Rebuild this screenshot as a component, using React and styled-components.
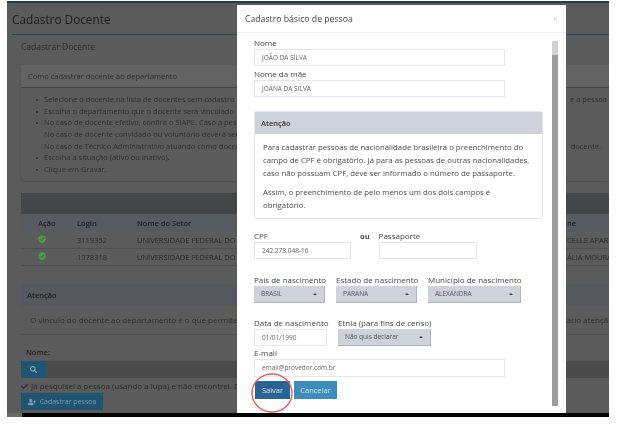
import React from 'react'
import styled, { createGlobalStyle } from 'styled-components'
import { FaCheckCircle, FaSearch, FaUserPlus, FaCheck } from 'react-icons/fa'

const GlobalStyle = createGlobalStyle`
  html, body { margin: 0; padding: 0; background: #fff; }
  body { font-family: "Open Sans", "Liberation Sans", sans-serif; width: 622px; height: 427px; overflow: hidden; }
`

const Screen = styled.div`
  position: relative;
  width: 622px;
  height: 427px;
  overflow: hidden;
  background: #fff;
`
const Page = styled.div`
  margin: 1px 0 0 7px;
  width: 602px;
  height: 416px;
  background: #5b5b5b;
  color: #262626;
  overflow: hidden;
  display: flex;
  flex-direction: column;
  filter: blur(0.55px);
  border-top: 2px solid #1d3d4e;
  box-sizing: border-box;
`
const PageTitle = styled.div`
  height: 32px;
  flex: none;
  margin-left: 5px;
  padding-top: 6px;
  box-sizing: border-box;
  border-bottom: 1px solid #1d4a62;
  font-size: 11.8px;
  line-height: 20px;
  color: #1c1c1c;
`
const SubTitle = styled.div`
  margin: 5px 0 0 14px;
  font-size: 8.5px;
  line-height: 14px;
  color: #2b2b2b;
`
const Panel = styled.div`
  margin: 11px 0 0 14px;
  height: 116px;
  flex: none;
  box-sizing: border-box;
  border-radius: 3px 0 0 5px;
  box-shadow: 0 1px 2px #4c4c4c;
  font-size: 7.5px;
  color: #2e2e2e;
`
const PanelHead = styled.div`
  height: 23px;
  padding-left: 7px;
  line-height: 22px;
  background: #636363;
  border-bottom: 1px solid #454545;
  box-sizing: border-box;
`
const BulletList = styled.div`
  padding: 6px 0 0 23px;
`
const Line = styled.div`
  display: flex;
  justify-content: space-between;
  height: 11.7px;
  line-height: 11.7px;
  white-space: nowrap;
  position: relative;
  &::before {
    content: ${p => (p.$plain ? 'none' : '""')};
    position: absolute;
    left: -8px;
    top: 5px;
    width: 2px;
    height: 2px;
    border-radius: 50%;
    background: #222;
  }
`
const Tail = styled.span`
  margin-right: ${p => p.$right}px;
`
const TableBlock = styled.div`
  margin: 12px 0 0 14px;
`
const TableBar = styled.div`
  height: 21px;
  background: #444648;
`
const TableRow = styled.div`
  display: grid;
  grid-template-columns: 15px 39px 60px 1fr 42px;
  height: ${p => (p.$head ? '18px' : '17px')};
  align-items: center;
  background: ${p => (p.$head ? '#575a5e' : 'transparent')};
  border-bottom: ${p => (p.$head ? '0' : '1px solid #4e4e4e')};
  box-sizing: border-box;
  font-size: 7.5px;
  color: ${p => (p.$head ? '#222' : '#2a2a2a')};
  font-weight: ${p => (p.$head ? 600 : 400)};
  white-space: nowrap;
  overflow: hidden;
`
const Cell = styled.div`
  padding-left: 2px;
  display: flex;
`
const OkIcon = styled(FaCheckCircle)`
  color: #4ba04a;
  font-size: 8px;
  margin-top: -3px;
`
const Notice = styled.div`
  margin: 18px 0 0 14px;
  height: 50px;
  flex: none;
  border-bottom: 1px solid #505050;
  font-size: 8px;
  color: #2d2d2d;
`
const NoticeHead = styled.div`
  height: 22px;
  padding-left: 6px;
  line-height: 22px;
  background: #55585c;
  font-weight: 600;
  font-size: 7.5px;
  color: #222;
`
const NoticeBody = styled.div`
  display: flex;
  justify-content: space-between;
  padding: 7px 0 0 9px;
  line-height: 13px;
  white-space: nowrap;
  overflow: hidden;
`
const SearchLabel = styled.div`
  margin: 11px 0 0 19px;
  font-size: 7.5px;
  font-weight: 600;
  line-height: 12px;
  color: #222;
`
const SearchRow = styled.div`
  margin: 3px 0 0 14px;
  height: 17px;
  flex: none;
  display: flex;
  background: #4b4b4b;
`
const SearchButton = styled.div`
  width: 25px;
  background: #1e5573;
  color: #8fa9b8;
  font-size: 7px;
  display: flex;
  align-items: center;
  justify-content: center;
`
const CheckLine = styled.div`
  margin: 2px 0 0 14px;
  height: 12px;
  flex: none;
  font-size: 8px;
  line-height: 12px;
  display: flex;
  align-items: center;
  gap: 3px;
  color: #2a2a2a;
  white-space: nowrap;
`
const CreateButton = styled.div`
  margin: 1px 0 0 14px;
  width: 82px;
  height: 17px;
  flex: none;
  background: #1e5573;
  color: #7f9bab;
  font-size: 7px;
  display: flex;
  align-items: center;
  justify-content: center;
  gap: 4px;
`
const BottomBar = styled.div`
  margin-top: auto;
  height: 4px;
  flex: none;
  background: #050505;
  &::before {
    content: "";
    display: block;
    width: 15px;
    height: 100%;
    background: #6a6a6a;
  }
`
const Modal = styled.div`
  position: absolute;
  left: 237px;
  top: 5px;
  width: 329px;
  height: 408px;
  background: #fff;
  color: #4a4a4a;
  display: flex;
  flex-direction: column;
  filter: blur(0.65px);
`
const ModalHead = styled.div`
  height: 28px;
  flex: none;
  box-sizing: border-box;
  padding: 6px 8px 0;
  border-bottom: 1px solid #eee;
  display: flex;
  justify-content: space-between;
  font-size: 8.7px;
  line-height: 16px;
  color: #444;
`
const Close = styled.span`
  color: #ccc;
  font-size: 9px;
`
const ModalBody = styled.div`
  flex: 1;
  position: relative;
  overflow: hidden;
  padding: 5px 61px 0 17px;
`
const Scrollbar = styled.div`
  position: absolute;
  right: 8px;
  top: 8px;
  bottom: 7px;
  width: 6px;
  background: #d2d2d2;
  &::after {
    content: "";
    position: absolute;
    left: 0;
    right: 0;
    top: 14px;
    bottom: 0;
    background: #9c9c9c;
  }
`
const Label = styled.div`
  font-size: 8px;
  line-height: 10px;
  width: 0;
  color: #4a4a4a;
  white-space: nowrap;
`
const Or = styled.div`
  font-size: 7.5px;
  font-weight: 700;
  line-height: 10px;
  color: #4a4a4a;
`
const Input = styled.div`
  width: ${p => p.$w}px;
  height: ${p => p.$h || 17}px;
  box-sizing: border-box;
  border: 1px solid #e4e6ee;
  padding-left: 7px;
  font-size: 6.5px;
  line-height: 15px;
  color: #666;
  white-space: nowrap;
`
const Select = styled.div`
  width: ${p => p.$w}px;
  height: 17px;
  box-sizing: border-box;
  background: #ced2db;
  border-right: 1px solid #aeb2bc;
  border-bottom: 1px solid #aeb2bc;
  padding: 0 7px 0 7px;
  font-size: 6.5px;
  line-height: 16px;
  color: #555;
  display: flex;
  justify-content: space-between;
  align-items: center;
  white-space: nowrap;
  &::after {
    content: "";
    border-left: 2.5px solid transparent;
    border-right: 2.5px solid transparent;
    border-bottom: 2.5px solid #444;
  }
`
const Field = styled.div`
  display: flex;
  flex-direction: column;
  gap: 1px;
  margin-top: ${p => p.$top || 0}px;
`
const Row = styled.div`
  display: flex;
  gap: ${p => p.$gap || 11}px;
  margin-top: ${p => p.$top || 0}px;
`
const Box = styled.div`
  width: 289px;
  height: 108px;
  box-sizing: border-box;
  margin-top: 14px;
  border: 1px solid #e4e6ee;
  border-radius: 2px;
`
const BoxHead = styled.div`
  height: 22px;
  padding-left: 6px;
  background: #ced2db;
  font-size: 7.5px;
  font-weight: 600;
  line-height: 22px;
  color: #333;
`
const BoxBody = styled.div`
  padding: 7px 4px 0 8px;
  font-size: 7.8px;
  line-height: 12.8px;
  color: #4c4c4c;
  white-space: nowrap;
`
const BoxText = styled.div`
  margin-top: ${p => p.$top || 0}px;
`
const Buttons = styled.div`
  display: flex;
  gap: 4px;
  margin: 4px 0 0 1px;
`
const Action = styled.div`
  height: 18px;
  width: ${p => p.$w}px;
  background: ${p => p.$bg};
  color: #d8e6f0;
  font-size: 7.5px;
  line-height: 18px;
  text-align: center;
`
const Ring = styled.svg`
  position: absolute;
  left: 251px;
  top: 372px;
`

export default function App() {
  return (
    <>
      <GlobalStyle />
      <Screen>
        <Page>
          <PageTitle>Cadastro Docente</PageTitle>
          <SubTitle>Cadastrar Docente</SubTitle>
          <Panel>
            <PanelHead>Como cadastrar docente ao departamento</PanelHead>
            <BulletList>
              <Line><span>Selecione o docente na lista de docentes sem cadastro</span><Tail $right={2}>e a pessoa</Tail></Line>
              <Line><span>Escolha o departamento que o docente será vinculado</span></Line>
              <Line><span>No caso de docente efetivo, confira o SIAPE. Caso a pessoa</span></Line>
              <Line $plain><span>No caso de docente convidado ou voluntário deverá ser</span></Line>
              <Line $plain><span>No caso de Técnico Administrativo atuando como docente</span><Tail $right={8}>docente.</Tail></Line>
              <Line><span>Escolha a situação (ativo ou inativo).</span></Line>
              <Line><span>Clique em Gravar.</span></Line>
            </BulletList>
          </Panel>
          <TableBlock>
            <TableBar />
            <TableRow $head>
              <span />
              <Cell>Ação</Cell>
              <Cell>Login</Cell>
              <Cell>Nome do Setor</Cell>
              <span>ne</span>
            </TableRow>
            <TableRow>
              <span />
              <Cell><OkIcon /></Cell>
              <Cell>3119352</Cell>
              <Cell>UNIVERSIDADE FEDERAL DO</Cell>
              <span>CELLE APARE</span>
            </TableRow>
            <TableRow>
              <span />
              <Cell><OkIcon /></Cell>
              <Cell>1378318</Cell>
              <Cell>UNIVERSIDADE FEDERAL DO</Cell>
              <span>ÁLIA MOURA</span>
            </TableRow>
          </TableBlock>
          <Notice>
            <NoticeHead>Atenção</NoticeHead>
            <NoticeBody>
              <span>O vínculo do docente ao departamento é o que permite o</span>
              <Tail $right={-4}>ário atenção</Tail>
            </NoticeBody>
          </Notice>
          <SearchLabel>Nome:</SearchLabel>
          <SearchRow>
            <SearchButton><FaSearch /></SearchButton>
          </SearchRow>
          <CheckLine>
            <FaCheck size={7} />
            Já pesquisei a pessoa (usando a lupa) e não encontrei. D
          </CheckLine>
          <CreateButton><FaUserPlus size={8} />Cadastrar pessoa</CreateButton>
          <BottomBar />
        </Page>

        <Modal>
          <ModalHead>
            <span>Cadastro básico de pessoa</span>
            <Close>×</Close>
          </ModalHead>
          <ModalBody>
            <Scrollbar />
            <Field>
              <Label>Nome</Label>
              <Input $w={251}>JOÃO DA SILVA</Input>
            </Field>
            <Field $top={3}>
              <Label>Nome da mãe</Label>
              <Input $w={251}>JOANA DA SILVA</Input>
            </Field>
            <Box>
              <BoxHead>Atenção</BoxHead>
              <BoxBody>
                <BoxText>
                  Para cadastrar pessoas de nacionalidade brasileira o preenchimento do<br />
                  campo de CPF é obrigatório. Já para as pessoas de outras nacionalidades,<br />
                  caso não possuam CPF, deve ser informado o número de passaporte.
                </BoxText>
                <BoxText $top={7}>
                  Assim, o preenchimento de pelo menos um dos dois campos é<br />
                  obrigatório.
                </BoxText>
              </BoxBody>
            </Box>
            <Row $gap={9} $top={12}>
              <Field>
                <Label>CPF</Label>
                <Input $w={97}>242.278.048-16</Input>
              </Field>
              <Or>ou</Or>
              <Field>
                <Label>Passaporte</Label>
                <Input $w={98} />
              </Field>
            </Row>
            <Row $top={16}>
              <Field>
                <Label>País de nascimento</Label>
                <Select $w={71}>BRASIL</Select>
              </Field>
              <Field>
                <Label>Estado de nascimento</Label>
                <Select $w={81}>PARANÁ</Select>
              </Field>
              <Field>
                <Label>Município de nascimento</Label>
                <Select $w={93}>ALEXANDRA</Select>
              </Field>
            </Row>
            <Row $top={15}>
              <Field>
                <Label>Data de nascimento</Label>
                <Input $w={73}>01/01/1990</Input>
              </Field>
              <Field>
                <Label>Etnia (para fins de censo)</Label>
                <Select $w={93}>Não quis declarar</Select>
              </Field>
            </Row>
            <Field $top={2}>
              <Label>E-mail</Label>
              <Input $w={251} $h={18}>email@provedor.com.br</Input>
            </Field>
            <Buttons>
              <Action $w={35} $bg="#2a6496">Salvar</Action>
              <Action $w={43} $bg="#3c8dbc">Cancelar</Action>
            </Buttons>
          </ModalBody>
        </Modal>
        <Ring width="44" height="42" viewBox="0 0 44 42">
          <ellipse cx="21" cy="21" rx="20" ry="19" fill="none" stroke="#e2605f" strokeWidth="1.4" />
        </Ring>
      </Screen>
    </>
  )
}
